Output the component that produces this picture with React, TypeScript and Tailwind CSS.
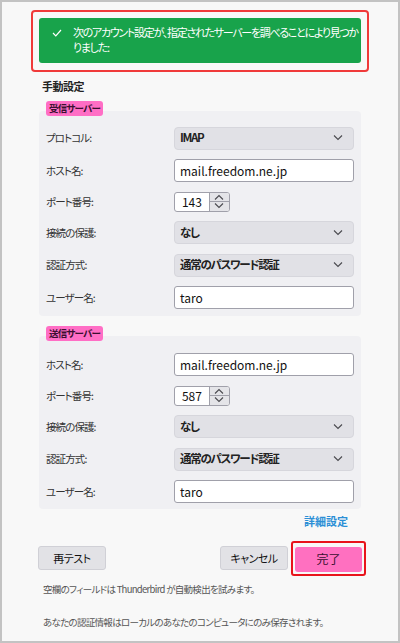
import React from "react";

const font = { fontFamily: '"Noto Sans CJK JP", "Noto Sans", sans-serif' };

function Chevron({ up = false }: { up?: boolean }) {
  return (
    <svg width="10" height="6" viewBox="0 0 10 6" fill="none" stroke="#4a4a4f" strokeWidth="1.1">
      {up ? <path d="M1 5.5 L5 1.5 L9 5.5" /> : <path d="M1 0.5 L5 4.5 L9 0.5" />}
    </svg>
  );
}

function Row({ label, children }: { label: string; children: React.ReactNode }) {
  return (
    <div className="flex items-center">
      <div className="w-[128px] text-[10.5px] tracking-[-0.9px] text-[#333]">{label}</div>
      <div className="flex-1">{children}</div>
    </div>
  );
}

function Select({ value }: { value: string }) {
  return (
    <div className="flex h-[23px] items-center justify-between rounded-[4px] border border-[#d6d6dc] bg-[#e1e1e6] pl-[5px] pr-[10px]">
      <span className="text-[11.5px] font-bold tracking-[-1.3px] text-[#222]">{value}</span>
      <Chevron />
    </div>
  );
}

function Input({ value }: { value: string }) {
  return (
    <div className="flex h-[23px] items-center rounded-[3px] border border-[#a0a0aa] bg-white pl-[5px] text-[12px] text-[#111]">
      {value}
    </div>
  );
}

function Port({ value }: { value: string }) {
  return (
    <div className="flex h-[20px] w-[56px] overflow-hidden rounded-[3px] border border-[#a0a0aa] bg-white">
      <div className="flex w-[35px] items-center justify-center text-[12px] text-[#111]">{value}</div>
      <div className="flex w-[21px] flex-col border-l border-[#a0a0aa] bg-[#e4e4e8]">
        <div className="flex flex-1 items-center justify-center border-b border-[#a0a0aa]">
          <Chevron up />
        </div>
        <div className="flex flex-1 items-center justify-center">
          <Chevron />
        </div>
      </div>
    </div>
  );
}

function Badge({ text }: { text: string }) {
  return (
    <div className="relative z-10 mb-[-5px] ml-[7px] w-fit rounded-[3px] bg-[#ff6ec5] px-[3px] text-[9.5px] font-bold leading-[15px] tracking-[-0.8px] text-[#3a1030]">
      {text}
    </div>
  );
}

export default function App() {
  return (
    <div
      className="h-[643px] w-[400px] overflow-hidden border-2 border-[#c3c3c3] bg-[#f8f8f8] [font-feature-settings:'palt']"
      style={font}
    >
      {/* found banner */}
      <div className="ml-[29px] mt-[8px] w-[338px] rounded-[4px] border-2 border-[#f03a3a] px-[6px] pb-[7px] pt-[6px]">
        <div className="flex h-[45px] items-start overflow-hidden rounded-[3px] bg-[#18a34b] pl-[13px] pr-[4px] pt-[7px] text-white">
          <svg width="10" height="8" viewBox="0 0 10 8" className="mt-[4px] shrink-0" fill="none" stroke="white" strokeWidth="1.2">
            <path d="M1 4 L3.8 6.8 L9 1" />
          </svg>
          <div className="ml-[11px] flex flex-col whitespace-nowrap text-[11px] leading-[15px] tracking-[-1.3px]">
            <span>次のアカウント設定が、指定されたサーバーを調べることにより見つか</span>
            <span>りました:</span>
          </div>
        </div>
      </div>

      <div className="ml-[37px] mr-[37px]">
        <div className="mt-[6px] pl-[3px] text-[11px] font-bold tracking-[-0.5px] text-[#222]">手動設定</div>

        {/* incoming */}
        <div className="mt-[6px]">
          <Badge text="受信サーバー" />
          <div className="flex flex-col gap-[9.5px] rounded-[4px] bg-[#f0f0f3] pb-[7px] pl-[7px] pr-[7px] pt-[16px]">
            <Row label="プロトコル:"><Select value="IMAP" /></Row>
            <Row label="ホスト名:"><Input value="mail.freedom.ne.jp" /></Row>
            <Row label="ポート番号:"><Port value="143" /></Row>
            <Row label="接続の保護:"><Select value="なし" /></Row>
            <Row label="認証方式:"><Select value="通常のパスワード認証" /></Row>
            <Row label="ユーザー名:"><Input value="taro" /></Row>
          </div>
        </div>

        {/* outgoing */}
        <div className="mt-[10px]">
          <Badge text="送信サーバー" />
          <div className="flex flex-col gap-[9.5px] rounded-[4px] bg-[#f0f0f3] pb-[6px] pl-[7px] pr-[7px] pt-[17px]">
            <Row label="ホスト名:"><Input value="mail.freedom.ne.jp" /></Row>
            <Row label="ポート番号:"><Port value="587" /></Row>
            <Row label="接続の保護:"><Select value="なし" /></Row>
            <Row label="認証方式:"><Select value="通常のパスワード認証" /></Row>
            <Row label="ユーザー名:"><Input value="taro" /></Row>
          </div>
        </div>

        <div className="mt-[5px] flex justify-end pr-[13px]">
          <span className="text-[11px] font-bold leading-[14px] text-[#2b8fd6]">詳細設定</span>
        </div>
      </div>

      {/* buttons */}
      <div className="ml-[36px] mr-[32px] mt-[13px] flex items-center">
        <button className="h-[24px] w-[68px] rounded-[3px] border border-[#d0d0d6] bg-[#e2e2e6] text-[11px] tracking-[-0.5px] text-[#111]">
          再テスト
        </button>
        <div className="flex-1" />
        <button className="h-[24px] w-[68px] rounded-[3px] border border-[#d0d0d6] bg-[#e2e2e6] text-[11px] tracking-[-0.5px] text-[#111]">
          キャンセル
        </button>
        <div className="ml-[3px] rounded-[3px] border-2 border-[#e8141c] p-[2px]">
          <button className="h-[25px] w-[67px] rounded-[3px] bg-[#ff70c0] text-[12px] text-[#3a1030]">
            完了
          </button>
        </div>
      </div>

      <div className="ml-[41px] mt-[6px] text-[9.5px] leading-[14px] tracking-[-0.7px] text-[#555]">
        <p>空欄のフィールドは Thunderbird が自動検出を試みます。</p>
        <p className="mt-[19px]">あなたの認証情報はローカルのあなたのコンピュータにのみ保存されます。</p>
      </div>
    </div>
  );
}
